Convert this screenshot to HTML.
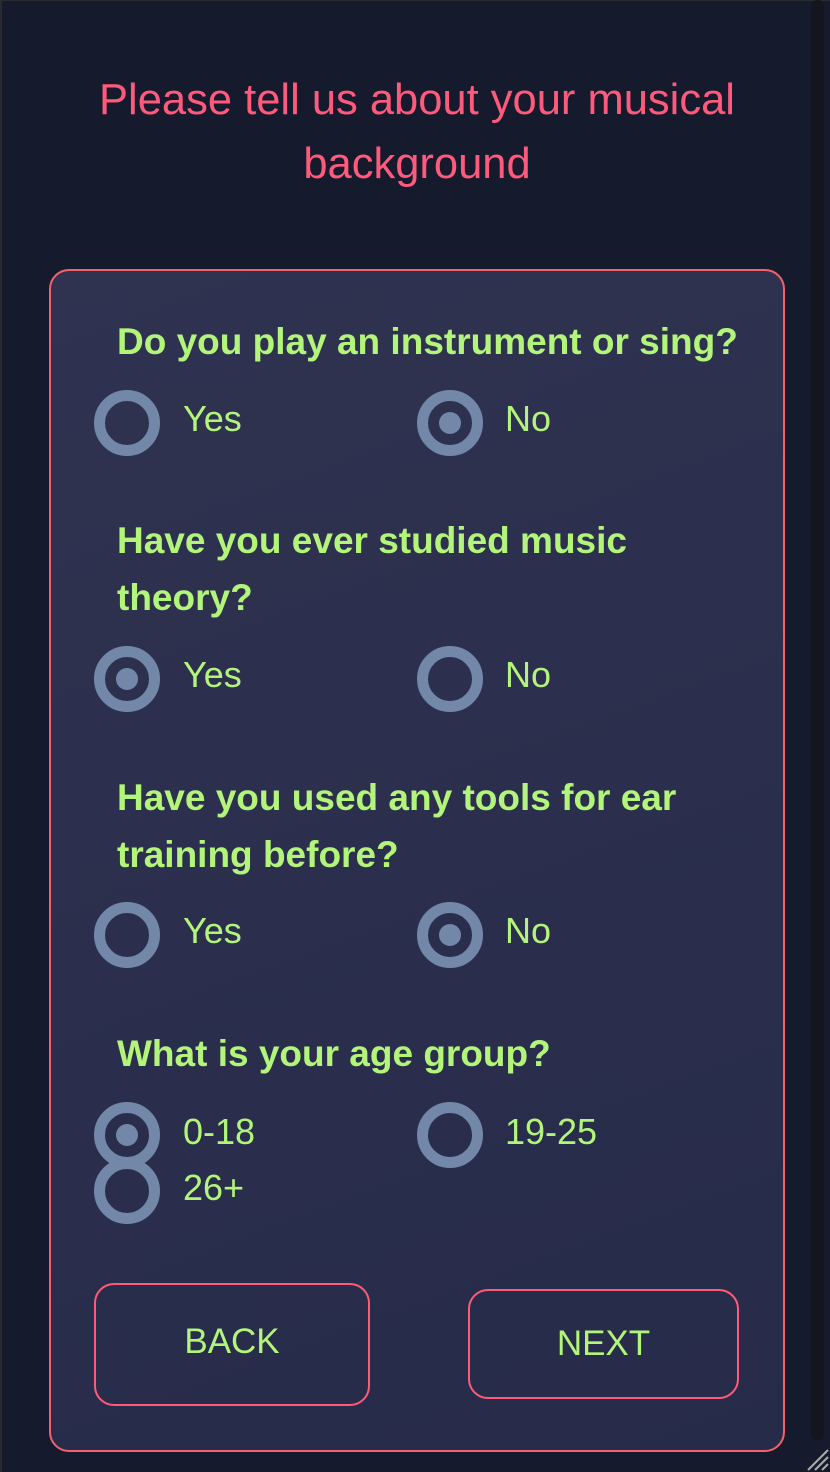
<!DOCTYPE html>
<html><head><style>
*{margin:0;padding:0;box-sizing:border-box}
body{width:830px;height:1472px;background:#161a2d;font-family:"Liberation Sans",sans-serif;position:relative;overflow:hidden}
.abs{position:absolute}
.title{left:0;width:834px;text-align:center;color:#ff5a7c;font-size:43.5px;line-height:64px;top:68px}
.card{left:49px;top:269px;width:736px;height:1183px;border:2px solid #f5606e;border-radius:20px;background:linear-gradient(160deg,#2f3350,#272b4a)}
.q{left:117px;color:#b3f57a;font-weight:bold;font-size:37px;line-height:57px;white-space:nowrap}
.r{width:66px;height:66px;border-radius:50%;border:11px solid #7387a9}
.r.on::after{content:"";position:absolute;left:11px;top:11px;width:22px;height:22px;border-radius:50%;background:#7387a9}
.l{color:#b3f57a;font-size:36px;line-height:40px}
.btn{border:2px solid #ff5a78;border-radius:20px;color:#b3f57a;font-size:35px;display:flex;align-items:center;justify-content:center}
.sb{left:811px;top:0;width:13px;height:1440px;background:#13151f;border-radius:6px}
</style></head><body>
<div class="abs" style="left:0;top:0;width:2px;height:1472px;background:#2a2b30"></div>
<div class="abs" style="left:0;top:0;width:830px;height:1px;background:#2a2b30"></div>
<div class="abs sb"></div>
<div class="abs title">Please tell us about your musical<br>background</div>
<div class="abs card"></div>

<div class="abs q" style="top:313px">Do you play an instrument or sing?</div>
<div class="abs r" style="left:94px;top:390px"></div><div class="abs l" style="left:183px;top:399px">Yes</div>
<div class="abs r on" style="left:417px;top:390px"></div><div class="abs l" style="left:505px;top:399px">No</div>

<div class="abs q" style="top:512px">Have you ever studied music<br>theory?</div>
<div class="abs r on" style="left:94px;top:646px"></div><div class="abs l" style="left:183px;top:655px">Yes</div>
<div class="abs r" style="left:417px;top:646px"></div><div class="abs l" style="left:505px;top:655px">No</div>

<div class="abs q" style="top:769px">Have you used any tools for ear<br>training before?</div>
<div class="abs r" style="left:94px;top:902px"></div><div class="abs l" style="left:183px;top:911px">Yes</div>
<div class="abs r on" style="left:417px;top:902px"></div><div class="abs l" style="left:505px;top:911px">No</div>

<div class="abs q" style="top:1025px">What is your age group?</div>
<div class="abs r on" style="left:94px;top:1102px"></div><div class="abs l" style="left:183px;top:1112px">0-18</div>
<div class="abs r" style="left:417px;top:1102px"></div><div class="abs l" style="left:505px;top:1112px">19-25</div>
<div class="abs r" style="left:94px;top:1158px"></div><div class="abs l" style="left:183px;top:1168px">26+</div>

<div class="abs btn" style="left:94px;top:1283px;width:276px;height:123px;padding-bottom:6px">BACK</div>
<div class="abs btn" style="left:468px;top:1289px;width:271px;height:110px">NEXT</div>
<svg class="abs" style="left:800px;top:1442px" width="30" height="30"><g stroke="#aaa" stroke-width="2"><line x1="28" y1="8" x2="8" y2="28"/><line x1="28" y1="15" x2="15" y2="28"/><line x1="28" y1="22" x2="22" y2="28"/></g></svg>
</body></html>
